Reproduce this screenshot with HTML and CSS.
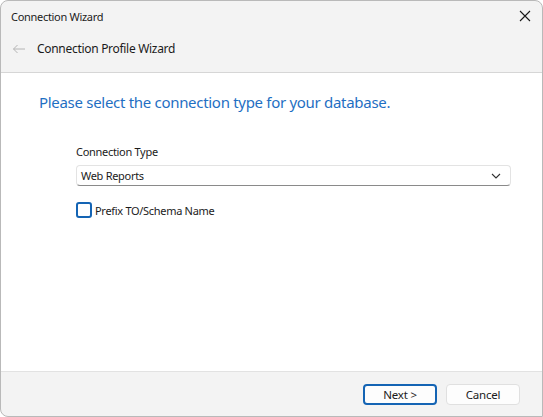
FILE: index.html
```html
<!DOCTYPE html>
<html lang="en">
<head>
    <meta charset="UTF-8">
    <title>Connection Wizard</title>
    <link rel="stylesheet" href="styles.css">
</head>
<body>

<div class="window">
    <div class="titlebar">
        <span class="title">Connection Wizard</span>
        <button class="close" aria-label="Close">
            <svg width="12" height="12" viewBox="0 0 12 12">
                <path d="M1 1 L11 11 M11 1 L1 11" stroke="#1a1a1a" stroke-width="1.1" fill="none"/>
            </svg>
        </button>
    </div>

    <div class="navbar">
        <svg class="back" width="14" height="10" viewBox="0 0 14 10">
            <path d="M13 5 H1.5 M5.5 1 L1.5 5 L5.5 9" stroke="#b4b4b4" stroke-width="1" fill="none"/>
        </svg>
        <span class="page-title">Connection Profile Wizard</span>
    </div>

    <div class="content">
        <h1>Please select the connection type for your database.</h1>

        <div class="form">
            <label class="field-label" for="connType">Connection Type</label>
            <div class="select">
                <span>Web Reports</span>
                <svg width="10" height="6" viewBox="0 0 10 6">
                    <path d="M1 1 L5 5 L9 1" stroke="#333" stroke-width="1.1" fill="none"/>
                </svg>
            </div>

            <label class="check">
                <span class="box"></span>
                Prefix TO/Schema Name
            </label>
        </div>
    </div>

    <div class="footer">
        <button class="btn primary">Next &gt;</button>
        <button class="btn">Cancel</button>
    </div>
</div>

</body>
</html>
```

FILE: styles.css
```css
* {
    box-sizing: border-box;
}

body {
    margin: 0;
    font-family: "Noto Sans", "Open Sans", sans-serif;
    color: #1b1b1b;
}

.window {
    width: 543px;
    height: 417px;
    display: flex;
    flex-direction: column;
    background-color: #f3f3f3;
    border: 1px solid #b9b9b9;
    border-radius: 8px 8px 0 8px;
    overflow: hidden;
}

.titlebar {
    height: 30px;
    display: flex;
    align-items: center;
    justify-content: space-between;
    padding-left: 10px;
}

.title {
    font-size: 11px;
    letter-spacing: -0.3px;
}

.close {
    width: 46px;
    height: 30px;
    border: none;
    background: none;
    display: flex;
    align-items: center;
    justify-content: center;
    padding: 0 0 0 12px;
}

.navbar {
    height: 42px;
    display: flex;
    align-items: center;
    padding: 0 0 6px 11px;
    border-bottom: 1px solid #d6d6d6;
}

.back {
    margin-right: 11px;
}

.page-title {
    font-size: 12px;
    letter-spacing: -0.3px;
}

.content {
    flex: 1;
    background-color: #ffffff;
    padding: 19px 0 0 38px;
}

h1 {
    margin: 0;
    font-size: 15px;
    font-weight: normal;
    color: #1f6fc3;
    letter-spacing: -0.3px;
}

.form {
    margin: 32px 0 0 37px;
    width: 435px;
}

.field-label {
    display: block;
    font-size: 11px;
    letter-spacing: -0.3px;
    margin-bottom: 6px;
}

.select {
    height: 21px;
    display: flex;
    align-items: center;
    justify-content: space-between;
    padding: 0 9px 0 4px;
    font-size: 11px;
    letter-spacing: -0.3px;
    border: 1px solid #e3e3e3;
    border-bottom-color: #8a8a8a;
    border-radius: 4px;
}

.check {
    display: flex;
    align-items: center;
    margin-top: 16px;
    font-size: 11px;
    letter-spacing: -0.3px;
}

.box {
    width: 16px;
    height: 16px;
    border: 2px solid #1464b4;
    border-radius: 3px;
    margin-right: 3px;
}

.footer {
    height: 45px;
    display: flex;
    justify-content: flex-end;
    align-items: center;
    gap: 9px;
    padding: 0 22px 0 0;
    border-top: 1px solid #e2e2e2;
}

.btn {
    width: 74px;
    height: 21px;
    font-family: inherit;
    font-size: 11.5px;
    letter-spacing: -0.2px;
    color: #1b1b1b;
    background-color: #fdfdfd;
    border: 1px solid #e0e0e0;
    border-radius: 4px;
    padding: 0;
}

.btn.primary {
    border: 2px solid #1464b4;
}
```
